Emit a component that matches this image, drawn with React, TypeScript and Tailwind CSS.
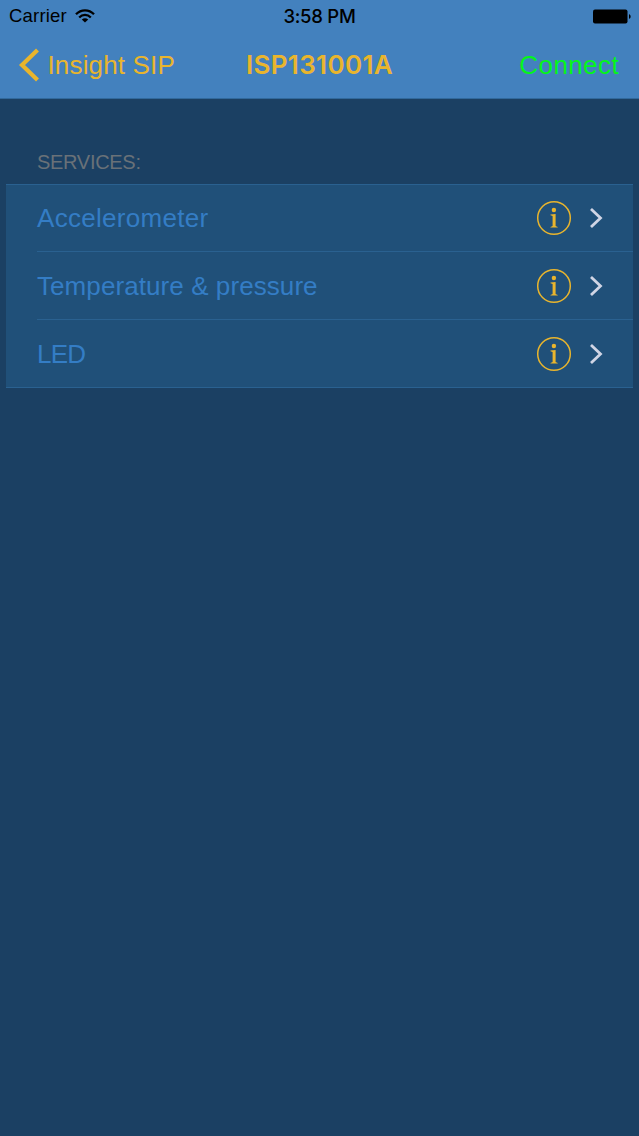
import React from "react";

const services = [
  { name: "Accelerometer", tracking: "tracking-[0.3px]" },
  { name: "Temperature & pressure", tracking: "tracking-[0.08px]" },
  { name: "LED", tracking: "tracking-[-0.8px]" },
];

function WifiIcon() {
  return (
    <svg className="ml-[8px] h-[14px] w-[20px]" viewBox="0 0 20 14" fill="none" stroke="#000" strokeWidth="2.3">
      <path d="M1 5.3C6 .1 14 .1 19 5.3" />
      <path d="M4.2 8.5C7.6 5.1 12.4 5.1 15.8 8.5" />
      <path d="M10 13.4 6.8 10.4C8.6 8.8 11.4 8.8 13.2 10.4Z" fill="#000" stroke="none" />
    </svg>
  );
}

function BatteryIcon() {
  return (
    <svg className="h-[15px] w-[38px]" viewBox="0 0 38 15" fill="#000">
      <rect x="0" y="0.5" width="34.5" height="14" rx="2" />
      <path d="M36 5.2c2.2.6 2.2 4 0 4.6Z" />
    </svg>
  );
}

function InfoIcon() {
  return (
    <svg className="h-[36px] w-[36px]" viewBox="0 0 36 36" fill="#e9b52d">
      <circle cx="18" cy="18" r="16.3" fill="none" stroke="#e9b52d" strokeWidth="1.5" />
      <circle cx="17.9" cy="10" r="2.2" />
      <path d="M14.5 14.6 19.6 14.1V26.1L21.7 26.9V27.6H14.5V26.9L16.6 26.1V15.9L14.5 15.3Z" />
    </svg>
  );
}

export default function App() {
  return (
    <div className="flex h-[1136px] w-[639px] flex-col bg-[#1b4063] font-['Liberation_Sans',sans-serif]">
      <header className="h-[99px] border-b border-[#31699c] bg-[#4381be]">
        <div className="grid h-[32px] grid-cols-3 items-center text-[18.5px] leading-[32px] text-black">
          <div className="flex items-center pl-[9px]">
            <span className="tracking-[0.2px]">Carrier</span>
            <WifiIcon />
          </div>
          <span className="text-center font-['Inter',sans-serif] font-medium tracking-[-0.25px]">3:58 PM</span>
          <div className="flex justify-end pr-[8px]">
            <BatteryIcon />
          </div>
        </div>
        <div className="grid h-[66px] grid-cols-3 items-center text-[26px] leading-[66px] text-[#e9b52d]">
          <div className="flex items-center pl-[18px]">
            <svg className="h-[34px] w-[22px]" viewBox="0 0 22 34" fill="none" stroke="#e9b52d" strokeWidth="4.2">
              <path d="M19.5 2 4 17 19.5 32" />
            </svg>
            <span className="ml-[7.5px] whitespace-nowrap tracking-[0.15px]">Insight SIP</span>
          </div>
          <span className="text-center font-['Inter',sans-serif] font-semibold tracking-[0.35px]">ISP131001A</span>
          <span className="pr-[20px] text-right tracking-[0.4px] text-[#05f51a]">Connect</span>
        </div>
      </header>
      <main className="px-[6px] pt-[45px]">
        <h2 className="h-[40px] pl-[31px] text-[20px] leading-[36px] tracking-[-0.3px] text-[#697178]">SERVICES:</h2>
        <ul className="h-[204px] border-y border-[#2a6190] bg-[#205079]">
          {services.map((service, index) => (
            <li key={service.name} className={index === 0 ? "h-[67px] pl-[31px]" : "h-[68px] pl-[31px]"}>
              <div className={index < 2 ? "flex h-full items-center border-b border-[#2a6190]" : "flex h-full items-center"}>
                <span className={`flex-1 text-[26px] leading-[66px] text-[#347dc5] ${service.tracking}`}>{service.name}</span>
                <InfoIcon />
                <svg className="ml-[17px] mr-[29px] h-[22px] w-[15px]" viewBox="0 0 15 22" fill="none" stroke="#d0d5e5" strokeWidth="2.8">
                  <path d="M2 2 11.5 11 2 20" />
                </svg>
              </div>
            </li>
          ))}
        </ul>
      </main>
    </div>
  );
}
